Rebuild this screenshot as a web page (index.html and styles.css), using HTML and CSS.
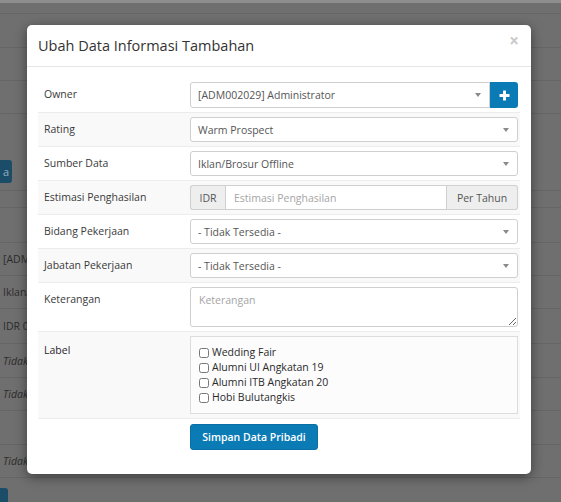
FILE: index.html
```html
<!DOCTYPE html>
<html>
<head>
<meta charset="utf-8">
<link rel="stylesheet" href="styles.css">
</head>
<body>
<div class="page">
  <div class="strip"></div>
  <div class="bg-row h11"></div>
  <div class="bg-row h34"></div>
  <div class="bg-row h33"></div>
  <div class="bg-row h33"></div>
  <div class="bg-row block"><span class="bg-btn">a</span></div>
  <div class="bg-row h17"></div>
  <div class="bg-row h35"></div>
  <div class="bg-row h33"><span class="peek">[ADM</span></div>
  <div class="bg-row h33"><span class="peek">Iklan/</span></div>
  <div class="bg-row h35"><span class="peek">IDR 0</span></div>
  <div class="bg-row h34 it"><span class="peek">Tidak</span></div>
  <div class="bg-row h33 it"><span class="peek">Tidak</span></div>
  <div class="bg-row h34"></div>
  <div class="bg-row h33 it"><span class="peek">Tidak</span></div>
  <div class="bg-btn2"></div>
</div>

<div class="modal">
  <div class="modal-header">
    <h4 class="modal-title">Ubah Data Informasi Tambahan</h4>
    <span class="close">&times;</span>
  </div>
  <div class="modal-body">
    <div class="frow">
      <div class="flabel">Owner</div>
      <div class="group owner">
        <div class="select grow"><span>[ADM002029] Administrator</span><span class="caret"></span></div>
        <div class="plus">
          <svg width="11" height="11" viewBox="0 0 11 11"><rect x="4" y="0.5" width="3" height="10" rx="0.5" fill="#fff"/><rect x="0.5" y="4" width="10" height="3" rx="0.5" fill="#fff"/></svg>
        </div>
      </div>
    </div>
    <div class="frow alt">
      <div class="flabel">Rating</div>
      <div class="select"><span>Warm Prospect</span><span class="caret"></span></div>
    </div>
    <div class="frow">
      <div class="flabel">Sumber Data</div>
      <div class="select"><span>Iklan/Brosur Offline</span><span class="caret"></span></div>
    </div>
    <div class="frow alt">
      <div class="flabel">Estimasi Penghasilan</div>
      <div class="group">
        <div class="addon idr">IDR</div>
        <input class="input" type="text" placeholder="Estimasi Penghasilan">
        <div class="addon per">Per Tahun</div>
      </div>
    </div>
    <div class="frow">
      <div class="flabel">Bidang Pekerjaan</div>
      <div class="select"><span>- Tidak Tersedia -</span><span class="caret"></span></div>
    </div>
    <div class="frow alt">
      <div class="flabel">Jabatan Pekerjaan</div>
      <div class="select"><span>- Tidak Tersedia -</span><span class="caret"></span></div>
    </div>
    <div class="frow">
      <div class="flabel">Keterangan</div>
      <textarea class="textarea" placeholder="Keterangan"></textarea>
    </div>
    <div class="frow alt">
      <div class="flabel lbl">Label</div>
      <div class="checks">
        <label class="check"><input type="checkbox"> Wedding Fair</label>
        <label class="check"><input type="checkbox"> Alumni UI Angkatan 19</label>
        <label class="check"><input type="checkbox"> Alumni ITB Angkatan 20</label>
        <label class="check"><input type="checkbox"> Hobi Bulutangkis</label>
      </div>
    </div>
    <div class="actions">
      <button class="btn">Simpan Data Pribadi</button>
    </div>
  </div>
</div>
</body>
</html>
```

FILE: styles.css
```css
* { box-sizing: border-box; }
html, body { margin: 0; padding: 0; }
body {
  width: 561px;
  height: 502px;
  overflow: hidden;
  position: relative;
  background: #6f6f6f;
  font-family: "Open Sans", "DejaVu Sans", sans-serif;
}

/* dimmed page behind modal */
.strip { height: 3px; background: #8e8e8e; }
.bg-row {
  border-bottom: 1px solid #656565;
  color: #2c2c2c;
  font-size: 10.5px;
  padding-left: 3px;
  display: flex;
  align-items: center;
  white-space: nowrap;
}
.bg-row.it { font-style: italic; }
.peek { display: block; width: 24px; overflow: hidden; }
.h11 { height: 11px; }
.h17 { height: 17px; }
.h33 { height: 33px; }
.h34 { height: 34px; }
.h35 { height: 35px; }
.block { height: 77px; align-items: flex-start; padding-left: 0; }
.bg-btn {
  margin-top: 46px;
  width: 12px;
  height: 23px;
  background: #1c4d68;
  border-radius: 0 3px 3px 0;
  color: #8fb1c4;
  font-size: 11px;
  line-height: 23px;
  text-align: right;
  padding-right: 3px;
  overflow: hidden;
}
.bg-btn2 {
  margin-top: 10px;
  width: 8px;
  height: 20px;
  background: #1c4d68;
  border-radius: 0 3px 0 0;
}

/* modal */
.modal {
  position: absolute;
  left: 27px;
  top: 25px;
  width: 504px;
  height: 449px;
  background: #fff;
  border-radius: 5px;
  box-shadow: 0 3px 12px rgba(0, 0, 0, 0.45);
}
.modal-header {
  height: 42px;
  border-bottom: 1px solid #e5e5e5;
  display: flex;
  align-items: center;
  justify-content: space-between;
  padding: 0 12px 0 11px;
}
.modal-title {
  margin: 0;
  font-size: 14.5px;
  font-weight: 400;
  color: #333;
}
.close {
  font-size: 17px;
  font-weight: 700;
  color: #cacaca;
  line-height: 1;
  margin-top: -10px;
}
.modal-body { padding: 11px 11px 0 11px; }

.frow {
  display: grid;
  grid-template-columns: 152px 1fr;
  padding: 4px 2px 4px 0;
  border-bottom: 1px solid #ececec;
}
.frow.alt { background: #f9f9f9; }
.flabel {
  padding-left: 6px;
  line-height: 25px;
  font-size: 10.5px;
  color: #3a3a3a;
}
.flabel.lbl { padding-top: 2px; color: #2a1f2e; }

.select {
  height: 25px;
  border: 1px solid #cfcfcf;
  border-radius: 3px;
  background: #fff;
  display: flex;
  align-items: center;
  justify-content: space-between;
  padding: 0 8px 0 7px;
  font-size: 10.5px;
  color: #555;
}
.caret {
  width: 0;
  height: 0;
  border-left: 3px solid transparent;
  border-right: 3px solid transparent;
  border-top: 4px solid #8a8a8a;
}
.group { display: flex; height: 25px; }
.group.owner { height: 26px; }
.group.owner .select { height: 26px; }
.grow { flex: 1; border-radius: 3px 0 0 3px; }
.plus {
  width: 28px;
  height: 26px;
  background: #0b7bb6;
  border-radius: 0 3px 3px 0;
  display: flex;
  align-items: center;
  justify-content: center;
}
.addon {
  height: 25px;
  background: #eee;
  border: 1px solid #cfcfcf;
  font-size: 10.5px;
  color: #555;
  display: flex;
  align-items: center;
  justify-content: center;
}
.idr { width: 35px; border-radius: 3px 0 0 3px; border-right: 0; }
.per { width: 71px; border-radius: 0 3px 3px 0; border-left: 0; }
.input {
  flex: 1;
  min-width: 0;
  height: 25px;
  border: 1px solid #cfcfcf;
  padding: 0 8px;
  font-family: inherit;
  font-size: 10.5px;
  color: #555;
  outline: none;
}
.input::placeholder, .textarea::placeholder { color: #a5a5a5; }
.textarea {
  display: block;
  width: 100%;
  height: 40px;
  border: 1px solid #cfcfcf;
  border-radius: 3px;
  padding: 5px 8px;
  font-family: inherit;
  font-size: 10.5px;
  margin: 0;
  resize: both;
  outline: none;
}
.checks {
  border: 1px solid #dcdcdc;
  background: #fcfcfd;
  padding: 8px 7px;
  display: flex;
  flex-direction: column;
}
.check {
  font-size: 10.5px;
  line-height: 15px;
  color: #2a2a2a;
  display: flex;
  align-items: center;
  white-space: nowrap;
}
.check input {
  width: 10px;
  height: 10px;
  margin: 0 3px 0 1px;
}
.actions {
  padding: 5px 0 0 152px;
}
.btn {
  width: 128px;
  height: 26px;
  background: #0b7bb6;
  color: #fff;
  border: 1px solid #0a6fa5;
  border-radius: 3px;
  font-family: inherit;
  font-size: 10.5px;
  font-weight: 600;
  padding: 0;
}
```
